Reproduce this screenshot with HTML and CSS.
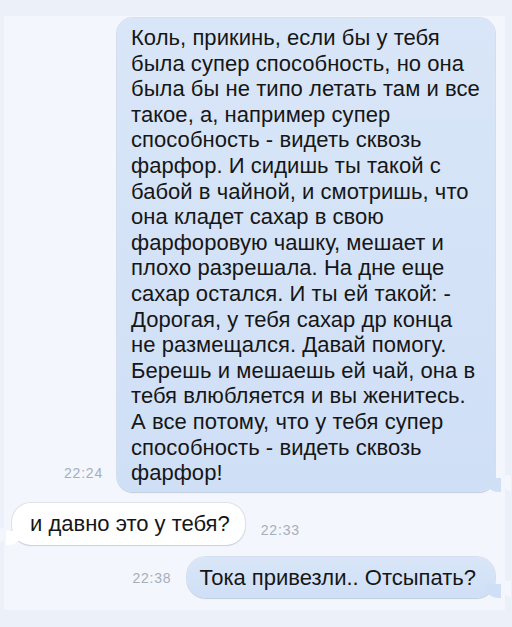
FILE: index.html
```html
<!DOCTYPE html>
<html lang="ru">
<head>
  <meta charset="UTF-8">
  <title>Сообщения</title>
  <link rel="stylesheet" href="styles.css">
</head>
<body>

<div class="chat">

  <div class="row row-out first">
    <span class="time">22:24</span>
    <div class="bubble out big">
      Коль, прикинь, если бы у тебя<br>
      была супер способность, но она<br>
      была бы не типо летать там и все<br>
      такое, а, например супер<br>
      способность - видеть сквозь<br>
      фарфор. И сидишь ты такой с<br>
      бабой в чайной, и смотришь, что<br>
      она кладет сахар в свою<br>
      фарфоровую чашку, мешает и<br>
      плохо разрешала. На дне еще<br>
      сахар остался. И ты ей такой: -<br>
      Дорогая, у тебя сахар др конца<br>
      не размещался. Давай помогу.<br>
      Берешь и мешаешь ей чай, она в<br>
      тебя влюбляется и вы женитесь.<br>
      А все потому, что у тебя супер<br>
      способность - видеть сквозь<br>
      фарфор!
    </div>
  </div>

  <div class="row row-in">
    <div class="bubble in">и давно это у тебя?</div>
    <span class="time">22:33</span>
  </div>

  <div class="row row-out last">
    <span class="time">22:38</span>
    <div class="bubble out short">Тока привезли.. Отсыпать?</div>
  </div>

</div>

</body>
</html>
```

FILE: styles.css
```css
body {
  margin: 0;
  background: #ecf1f9;
  font-family: "Liberation Sans", Arial, sans-serif;
  color: #161616;
}
.chat {
  margin: 16px 7px 0 4px;
  height: 594px;
  background: #f3f6fc;
  padding-top: 2px;
  box-sizing: border-box;
}
.row {
  display: flex;
  align-items: flex-end;
  gap: 14px;
}
.row-out {
  justify-content: flex-end;
  padding-right: 10px;
}
.row-in {
  padding-left: 8px;
  margin-top: 11px;
  gap: 16px;
}
.last {
  margin-top: 12px;
  gap: 16px;
}
.time {
  font-size: 14px;
  line-height: 16px;
  color: #a7aeba;
  letter-spacing: 0.8px;
}
.first .time {
  margin-bottom: 11px;
}
.row-in .time {
  margin-bottom: 7px;
}
.last .time {
  margin-bottom: 12px;
}
.bubble {
  position: relative;
  font-size: 22px;
  line-height: 26px;
  border-radius: 19px;
  white-space: nowrap;
}
.bubble.out {
  background: linear-gradient(#d9e6f8, #cfdff6);
  box-shadow: 0 0 0 1px rgba(160, 180, 210, 0.35), 0 1px 1px rgba(120, 140, 170, 0.25);
}
.bubble.in {
  background: #ffffff;
  box-shadow: 0 0 0 1px rgba(180, 190, 210, 0.35), 0 1px 1px rgba(120, 140, 170, 0.25);
  padding: 8px 15px 8px 18px;
}
.big {
  width: 378px;
  box-sizing: border-box;
  letter-spacing: 0.05px;
  line-height: 25.6px;
  padding: 7px 10px 6px 14px;
  border-radius: 16px;
}
.short {
  padding: 8px 19px 7px 12px;
}
/* хвостики пузырей */
.bubble.out::after {
  content: "";
  position: absolute;
  right: -6px;
  bottom: 0;
  width: 16px;
  height: 14px;
  background: #cfdff6;
  border-bottom-left-radius: 14px 12px;
}
.bubble.out::before {
  content: "";
  position: absolute;
  right: -16px;
  bottom: 1px;
  width: 10px;
  height: 16px;
  background: #f3f6fc;
  border-bottom-left-radius: 10px 12px;
  z-index: 1;
}
.bubble.in::after {
  content: "";
  position: absolute;
  left: -6px;
  bottom: 0;
  width: 16px;
  height: 14px;
  background: #ffffff;
  border-bottom-right-radius: 14px 12px;
}
.bubble.in::before {
  content: "";
  position: absolute;
  left: -16px;
  bottom: 1px;
  width: 10px;
  height: 16px;
  background: #f3f6fc;
  border-bottom-right-radius: 10px 12px;
  z-index: 1;
}
```
